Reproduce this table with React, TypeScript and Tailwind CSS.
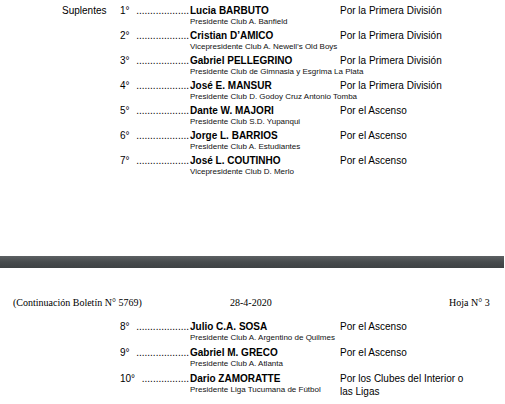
import React from "react";

type Row = { n: string; name: string; sub: string; right: string[]; label?: string };

const page1: Row[] = [
  { n: "1°", name: "Lucia BARBUTO", sub: "Presidente Club A. Banfield", right: ["Por la Primera División"], label: "Suplentes" },
  { n: "2°", name: "Cristian D’AMICO", sub: "Vicepresidente Club A. Newell’s Old Boys", right: ["Por la Primera División"] },
  { n: "3°", name: "Gabriel PELLEGRINO", sub: "Presidente Club de Gimnasia y Esgrima La Plata", right: ["Por la Primera División"] },
  { n: "4°", name: "José E. MANSUR", sub: "Presidente Club D. Godoy Cruz Antonio Tomba", right: ["Por la Primera División"] },
  { n: "5°", name: "Dante W. MAJORI", sub: "Presidente Club S.D. Yupanqui", right: ["Por el Ascenso"] },
  { n: "6°", name: "Jorge L. BARRIOS", sub: "Presidente Club A. Estudiantes", right: ["Por el Ascenso"] },
  { n: "7°", name: "José L. COUTINHO", sub: "Vicepresidente Club D. Merlo", right: ["Por el Ascenso"] },
];

const page2: Row[] = [
  { n: "8°", name: "Julio C.A. SOSA", sub: "Presidente Club A. Argentino de Quilmes", right: ["Por el Ascenso"] },
  { n: "9°", name: "Gabriel M. GRECO", sub: "Presidente Club A. Atlanta", right: ["Por el Ascenso"] },
  { n: "10°", name: "Dario ZAMORATTE", sub: "Presidente Liga Tucumana de Fútbol", right: ["Por los Clubes del Interior o", "las Ligas"] },
];

function RowView({ r }: { r: Row }) {
  const dots = ".".repeat(r.n.length > 2 ? 17 : 19);
  return (
    <div className="grid grid-cols-[120px_70px_150px_1fr] text-black">
      <div className="pl-[62px] text-[10px] leading-[13px]">{r.label ?? ""}</div>
      <div className="flex justify-between text-[10px] leading-[13px] pr-[1px] whitespace-nowrap">
        <span>{r.n}</span>
        <span>{dots}</span>
      </div>
      <div className="flex flex-col whitespace-nowrap">
        <span className="text-[10px] font-bold leading-[13px]">{r.name}</span>
        <span className="text-[8px] leading-[10px] text-[#111]">{r.sub}</span>
      </div>
      <div className="flex flex-col text-[10px] leading-[13px]">
        {r.right.map((t) => (
          <span key={t}>{t}</span>
        ))}
      </div>
    </div>
  );
}

export default function App() {
  return (
    <div
      className="w-[505px] h-[404px] overflow-hidden bg-white"
      style={{ fontFamily: '"Liberation Sans", Arial, sans-serif' }}
    >
      <div className="h-[256px] pt-[4px] flex flex-col gap-[2px]">
        {page1.map((r) => (
          <RowView key={r.n} r={r} />
        ))}
      </div>
      <div className="h-[12px] w-[504px] bg-gradient-to-b from-[#5d6163] via-[#474b4d] to-[#3e4244]" />
      <div
        className="mt-[29px] flex h-[12px] items-center text-[10px] leading-[12px] text-black"
        style={{ fontFamily: '"Liberation Serif", "Times New Roman", serif' }}
      >
        <span className="ml-[13px] w-[217px]">(Continuación Boletín N° 5769)</span>
        <span className="w-[219px]">28-4-2020</span>
        <span>Hoja N° 3</span>
      </div>
      <div className="mt-[11px] flex flex-col gap-[3px]">
        {page2.map((r) => (
          <RowView key={r.n} r={r} />
        ))}
      </div>
    </div>
  );
}
